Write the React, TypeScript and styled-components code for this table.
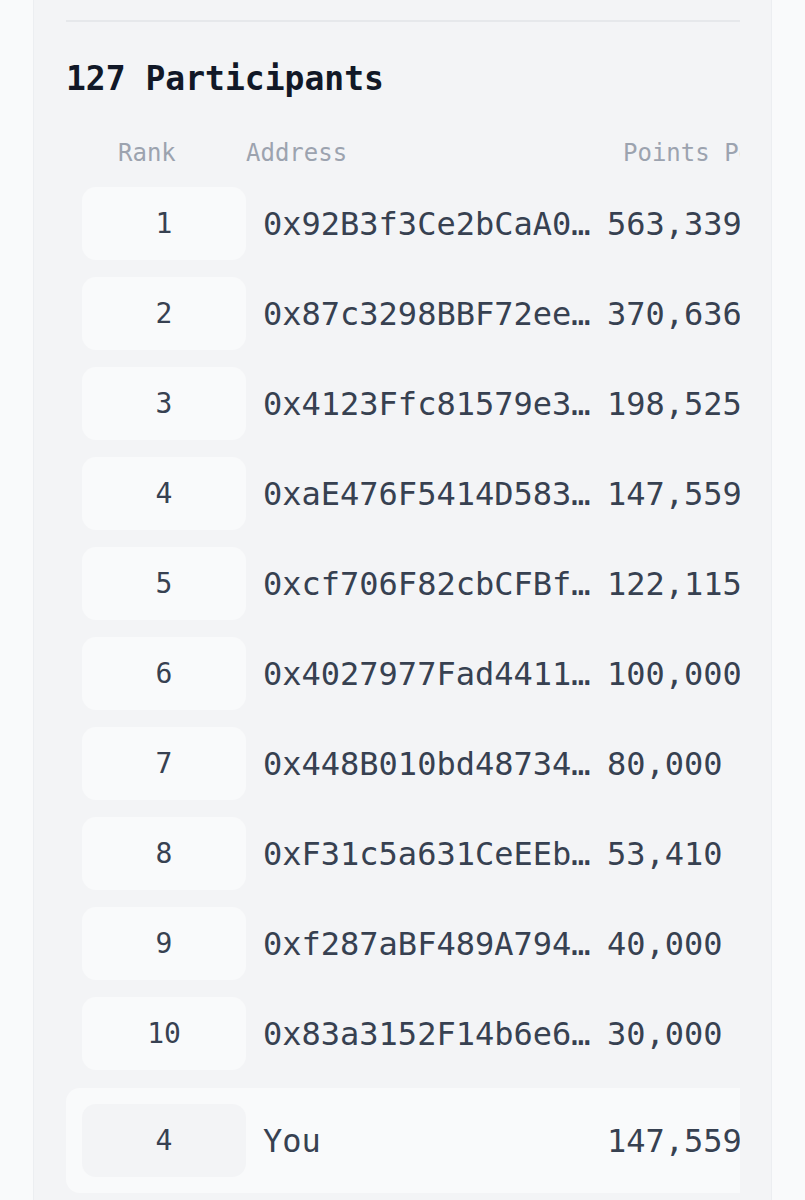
import styled, { createGlobalStyle } from "styled-components";

type Participant = {
  rank: number;
  address: string;
  points: string;
};

const participants: Participant[] = [
  { rank: 1, address: "0x92B3f3Ce2bCaA0d1E8a7f4c2b91D0e3A5c6B7d8E", points: "563,339" },
  { rank: 2, address: "0x87c3298BBF72ee4a1D6c0b93E2f5A7d8c1B4e6F0", points: "370,636" },
  { rank: 3, address: "0x4123Ffc81579e3B2a6D9c0E4f7A1b8C5d2e3F6a9", points: "198,525" },
  { rank: 4, address: "0xaE476F5414D583c9B2e1A0d7F6c4b3E8a5D2f1C0", points: "147,559" },
  { rank: 5, address: "0xcf706F82cbCFBf3A9e2D1c0B7a6F5e4d3C2b1A09", points: "122,115" },
  { rank: 6, address: "0x4027977Fad4411c8B3e2A1d0F9c7b6E5a4D3f2C1", points: "100,000" },
  { rank: 7, address: "0x448B010bd48734aE2c1D9f8B7a6C5e4D3b2F1a0E", points: "80,000" },
  { rank: 8, address: "0xF31c5a631CeEEb9d2A1c0F8e7B6a5D4c3E2f1b0A", points: "53,410" },
  { rank: 9, address: "0xf287aBF489A794c3D2e1F0a9B8c7E6d5A4f3C2b1", points: "40,000" },
  { rank: 10, address: "0x83a3152F14b6e6D9c8B7a6F5e4D3c2B1a0F9e8D7", points: "30,000" },
];

const GlobalStyle = createGlobalStyle`
  html, body {
    margin: 0;
    padding: 0;
    background: #f9fafb;
  }
  body {
    font-family: "DejaVu Sans Mono", "Liberation Mono", monospace;
    color: #374151;
  }
`;

export default function App() {
  return (
    <>
      <GlobalStyle />
      <StyledCard>
        <StyledDivider />
        <StyledTitle>127 Participants</StyledTitle>
        <StyledTable>
          <StyledHeaderRow>
            <StyledHeaderCell $indent={36}>Rank</StyledHeaderCell>
            <StyledHeaderCell $indent={0}>Address</StyledHeaderCell>
            <StyledHeaderCell $indent={16}>Points Per Day</StyledHeaderCell>
          </StyledHeaderRow>
          <StyledRows>
            {participants.map((p) => (
              <StyledRow key={p.rank}>
                <StyledRankCell>{p.rank}</StyledRankCell>
                <StyledAddressCell>{p.address}</StyledAddressCell>
                <StyledPointsCell>{p.points}</StyledPointsCell>
              </StyledRow>
            ))}
          </StyledRows>
          <StyledOwnRow>
            <StyledRankCell $muted>4</StyledRankCell>
            <StyledAddressCell>You</StyledAddressCell>
            <StyledPointsCell>147,559</StyledPointsCell>
          </StyledOwnRow>
        </StyledTable>
      </StyledCard>
    </>
  );
}

const StyledCard = styled.section`
  margin: 0 33px;
  min-height: 1200px;
  box-sizing: border-box;
  padding: 20px 31px 40px 32px;
  background: #f3f4f6;
  border-left: 1px solid #eceef1;
  border-right: 1px solid #eceef1;
`;

const StyledDivider = styled.div`
  height: 2px;
  background: #e6e8eb;
`;

const StyledTitle = styled.h2`
  margin: 37px 0 0;
  font-size: 33px;
  line-height: 40px;
  font-weight: 700;
  color: #111827;
`;

const StyledTable = styled.div`
  margin-top: 39px;
  overflow: hidden;
`;

const gridColumns = `
  display: grid;
  grid-template-columns: 164px 361px max-content;
  align-items: center;
  padding-left: 16px;
`;

const StyledHeaderRow = styled.div`
  ${gridColumns}
  height: 30px;
  font-size: 24px;
  line-height: 30px;
  color: #9ca3af;
  white-space: nowrap;
`;

const StyledHeaderCell = styled.div<{ $indent: number }>`
  padding-left: ${({ $indent }) => $indent}px;
`;

const StyledRows = styled.div`
  margin-top: 19px;
  display: flex;
  flex-direction: column;
  gap: 17px;
`;

const StyledRow = styled.div`
  ${gridColumns}
  font-size: 32px;
  line-height: 40px;
  color: #374151;
`;

const StyledOwnRow = styled(StyledRow)`
  margin-top: 18px;
  padding: 16px 0 16px 16px;
  background: #f9fafb;
  border-radius: 14px 0 0 14px;
`;

const StyledRankCell = styled.div<{ $muted?: boolean }>`
  height: 73px;
  display: flex;
  align-items: center;
  justify-content: center;
  border-radius: 14px;
  font-size: 28px;
  background: ${({ $muted }) => ($muted ? "#f3f4f6" : "#f9fafb")};
`;

const StyledAddressCell = styled.div`
  padding: 0 14px 0 17px;
  overflow: hidden;
  white-space: nowrap;
  text-overflow: ellipsis;
`;

const StyledPointsCell = styled.div`
  white-space: nowrap;
`;
